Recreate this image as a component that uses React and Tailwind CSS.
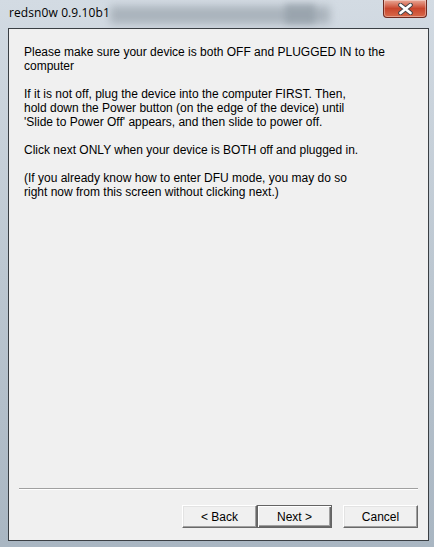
export default function App() {
  const paragraphs = [
    ["Please make sure your device is both OFF and PLUGGED IN to the", "computer"],
    [
      "If it is not off, plug the device into the computer FIRST. Then,",
      "hold down the Power button (on the edge of the device) until",
      "'Slide to Power Off' appears, and then slide to power off.",
    ],
    ["Click next ONLY when your device is BOTH off and plugged in."],
    [
      "(If you already know how to enter DFU mode, you may do so",
      "right now from this screen without clicking next.)",
    ],
  ];

  const btn =
    "w-[75px] h-[23px] bg-[#f0f0f0] text-[12px] text-black flex items-center justify-center";
  const raised =
    " border border-t-white border-l-white border-b-[#696969] border-r-[#696969] shadow-[inset_-1px_-1px_0_#a0a0a0,inset_1px_1px_0_#e3e3e3]";

  return (
    <div className="w-[434px] h-[547px] relative overflow-hidden flex flex-col bg-gradient-to-b from-[#d3dbe3] via-[#bcc7d1] to-[#a9b6c2] font-['Liberation_Sans',sans-serif]">
      {/* blurred things seen through the glass */}
      <div className="absolute left-[110px] top-[6px] w-[220px] h-[18px] bg-[#9aa4ad] blur-[4px] opacity-70" />
      <div className="absolute left-[285px] top-[4px] w-[30px] h-[20px] bg-[#8f9aa4] blur-[3px] opacity-60" />

      <div className="relative h-[28px] shrink-0 flex items-center pl-[9px] pb-[2px]">
        <span className="text-[12px] text-black font-['Open_Sans',sans-serif] tracking-[0.1px]">
          redsn0w 0.9.10b1
        </span>
        <div className="absolute left-[383px] top-0 w-[44px] h-[18px] rounded-b-[4px] border border-t-0 border-[#6e2a20] bg-gradient-to-b from-[#e9a897] via-[#c8452c] to-[#d8694a] flex items-center justify-center shadow-[inset_0_0_0_1px_rgba(255,255,255,0.35)]">
          <svg width="15" height="12" viewBox="0 0 15 12">
            <path
              d="M2.5 2 L12.5 10 M12.5 2 L2.5 10"
              stroke="#3f4348"
              strokeWidth="4.6"
              strokeLinecap="round"
            />
            <path
              d="M2.5 2 L12.5 10 M12.5 2 L2.5 10"
              stroke="#ffffff"
              strokeWidth="2.8"
              strokeLinecap="round"
            />
          </svg>
        </div>
      </div>

      <div className="relative ml-[8px] mr-[5px] mb-[6px] flex-1 flex flex-col border border-[#3a3f44] bg-[#f0f0f0]">
        <div className="flex-1 pl-[15px] pt-[16px] text-[12px] leading-[14px] text-black flex flex-col gap-[14px]">
          {paragraphs.map((lines, i) => (
            <p key={i}>
              {lines.map((l, j) => (
                <span key={j} className="block whitespace-nowrap">
                  {l}
                </span>
              ))}
            </p>
          ))}
        </div>

        <div className="mx-[10px] h-[2px] border-t border-[#a0a0a0] border-b border-b-white" />

        <div className="flex justify-end pr-[10px] pt-[15px] pb-[12px]">
          <button className={btn + raised}>&lt; Back</button>
          <button className={btn + " border border-[#646464] shadow-[inset_1px_1px_0_#ffffff,inset_-1px_-1px_0_#696969,inset_-2px_-2px_0_#a0a0a0]"}>
            Next &gt;
          </button>
          <button className={btn + " ml-[11px]" + raised}>Cancel</button>
        </div>
      </div>
    </div>
  );
}
